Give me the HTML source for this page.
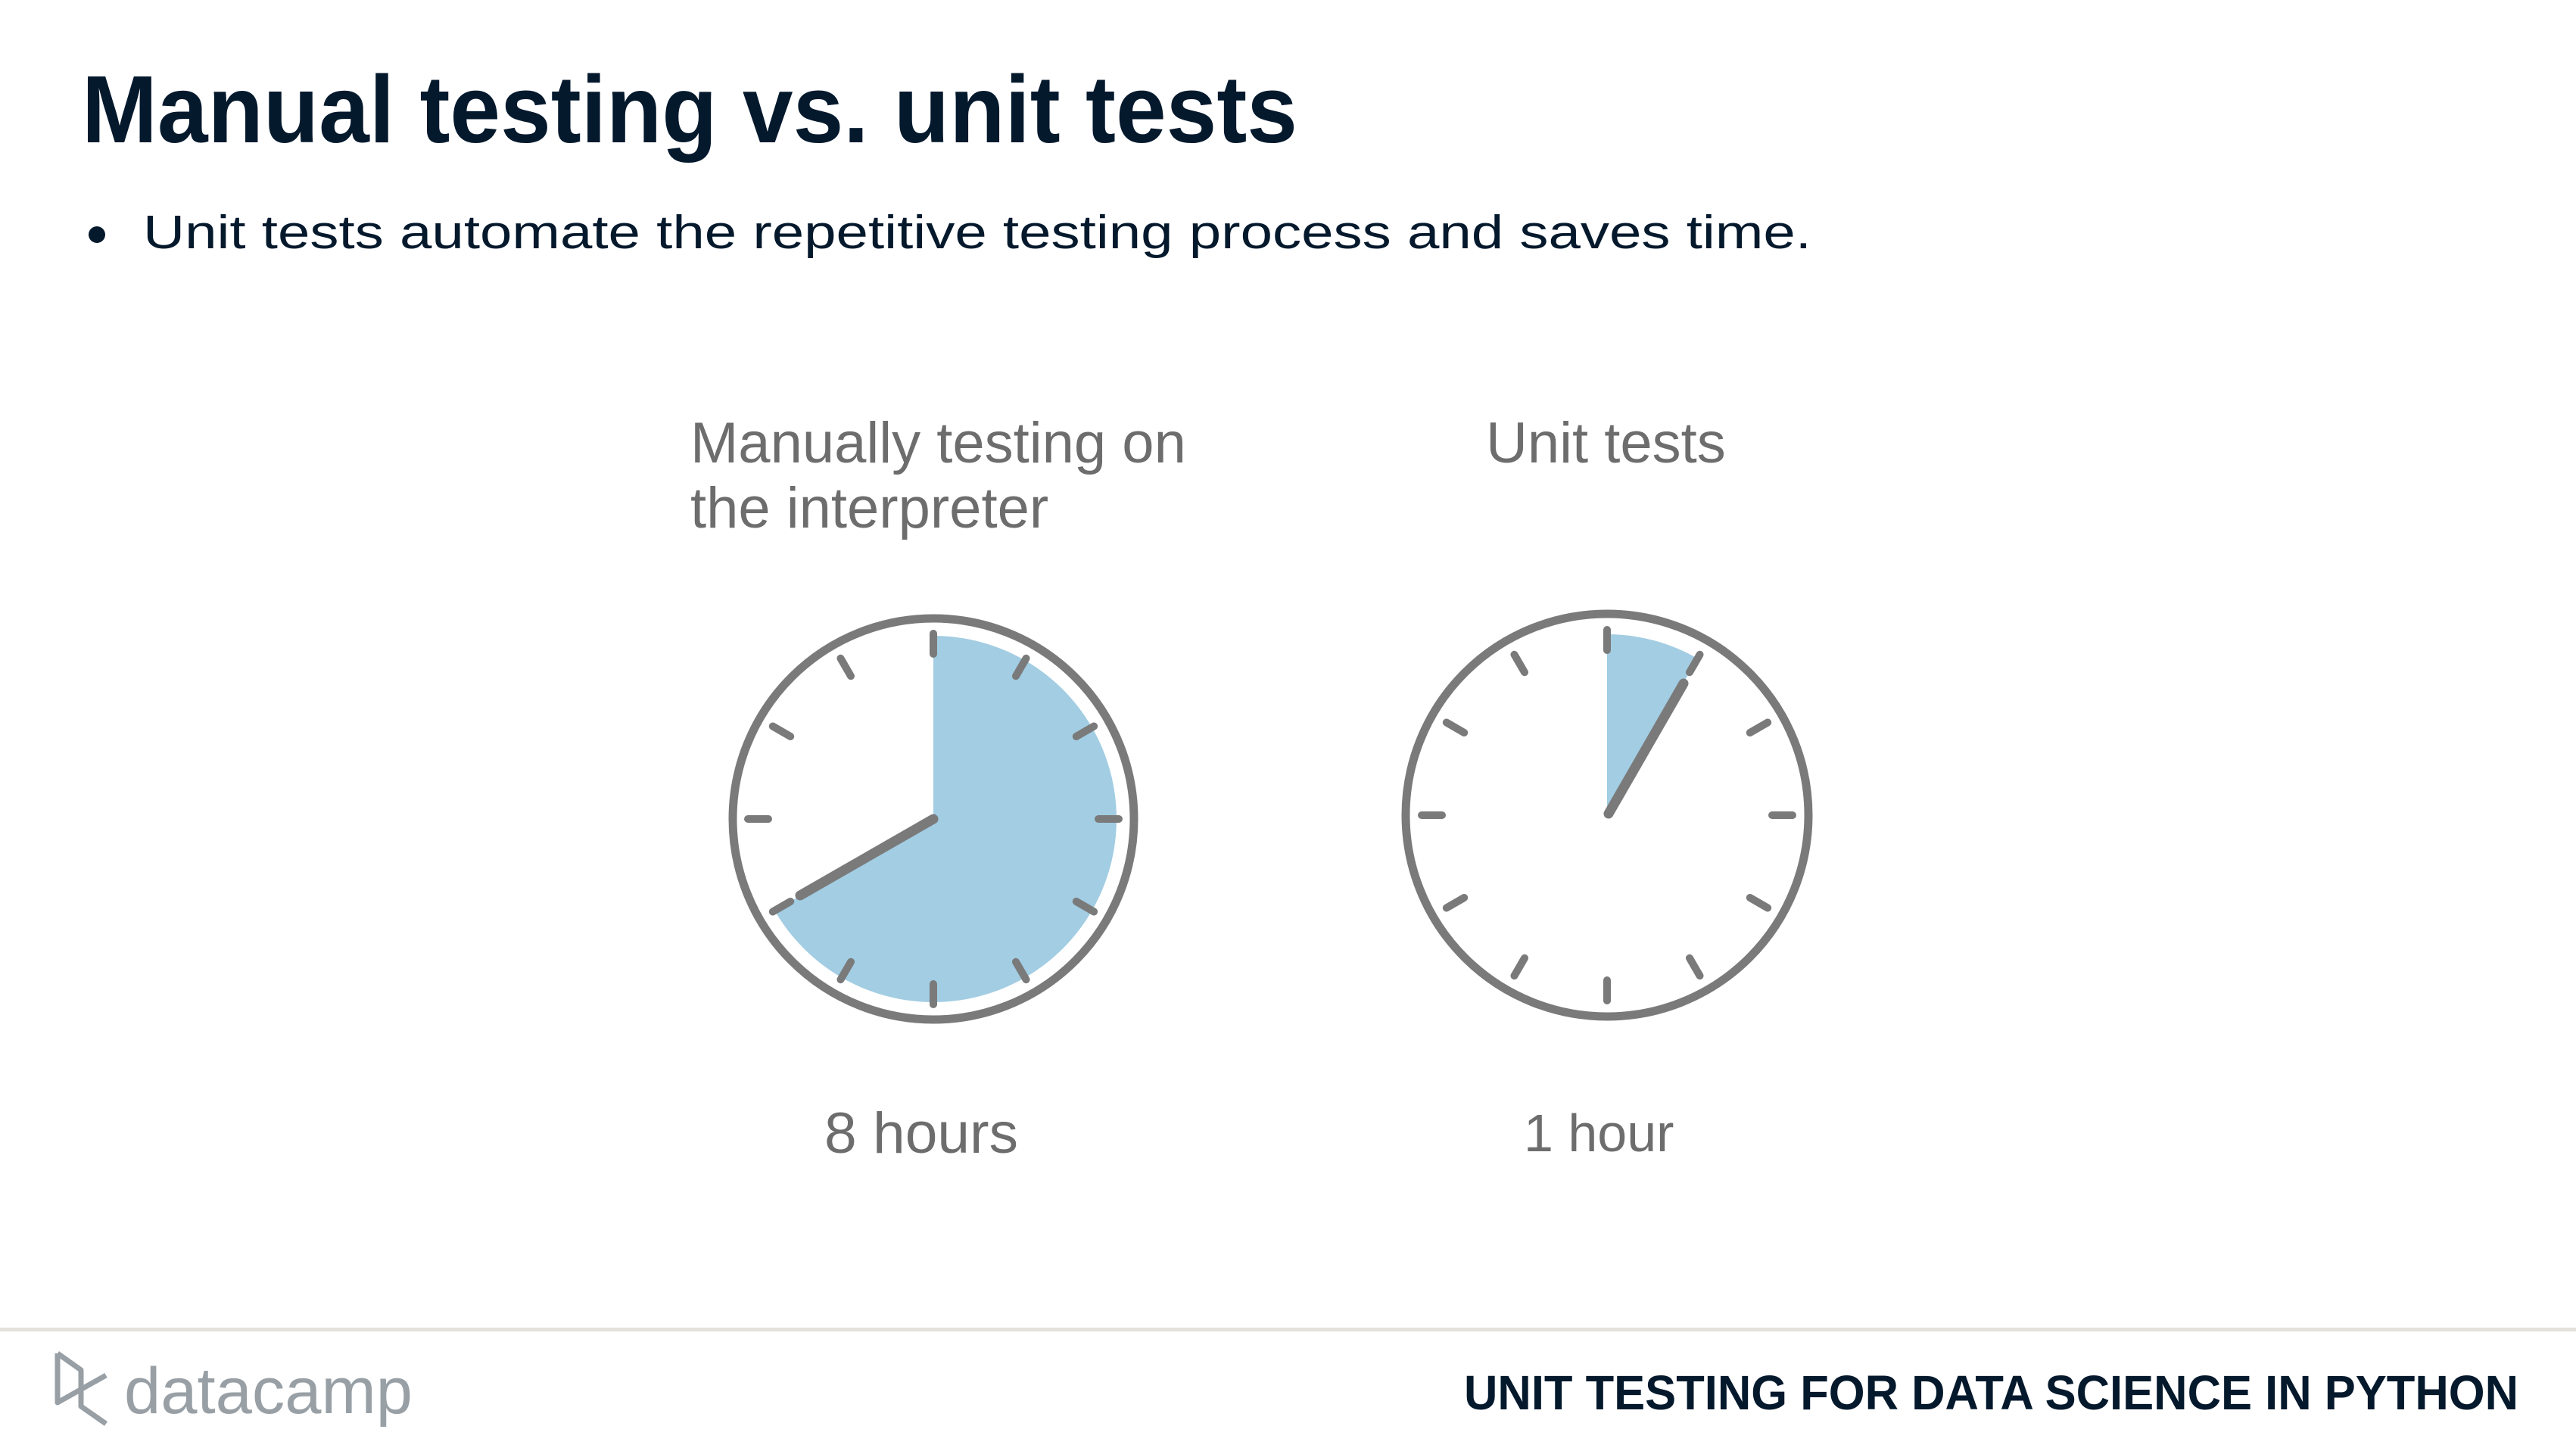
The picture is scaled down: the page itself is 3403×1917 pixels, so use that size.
<!DOCTYPE html>
<html><head><meta charset="utf-8"><style>html,body{margin:0;padding:0;background:#fff;}svg{display:block}</style></head>
<body>
<svg width="3403" height="1917" viewBox="0 0 3403 1917" xmlns="http://www.w3.org/2000/svg">
<rect width="3403" height="1917" fill="#fff"/>
<text x="108" y="188" font-family="Liberation Sans, sans-serif" font-weight="bold" font-size="126" fill="#05192d" textLength="1606" lengthAdjust="spacingAndGlyphs">Manual testing vs. unit tests</text>
<circle cx="128" cy="310" r="11" fill="#05192d"/>
<text x="189" y="328" font-family="Liberation Sans, sans-serif" font-size="62" fill="#05192d" textLength="2204" lengthAdjust="spacingAndGlyphs">Unit tests automate the repetitive testing process and saves time.</text>

<g font-family="Liberation Sans, sans-serif" font-size="76" fill="#6d6d6d">
<text x="912" y="611">Manually testing on</text>
<text x="912" y="697">the interpreter</text>
<text x="1963" y="611">Unit tests</text>
<text x="1089" y="1523" textLength="256" lengthAdjust="spacingAndGlyphs">8 hours</text>
<text x="2013" y="1521" font-size="70">1 hour</text>
</g>

<!-- clock 1 -->
<g transform="translate(1233,1082)">
<path d="M0 0 L0 -242 A242 242 0 1 1 -209.6 121 Z" fill="#a2cde3"/>
<circle r="265" fill="none" stroke="#7a7a7a" stroke-width="11"/>
<g stroke="#7a7a7a" stroke-width="10" stroke-linecap="round">
<line x1="0" y1="-218" x2="0" y2="-245" transform="rotate(0)"/>
<line x1="0" y1="-218" x2="0" y2="-245" transform="rotate(30)"/>
<line x1="0" y1="-218" x2="0" y2="-245" transform="rotate(60)"/>
<line x1="0" y1="-218" x2="0" y2="-245" transform="rotate(90)"/>
<line x1="0" y1="-218" x2="0" y2="-245" transform="rotate(120)"/>
<line x1="0" y1="-218" x2="0" y2="-245" transform="rotate(150)"/>
<line x1="0" y1="-218" x2="0" y2="-245" transform="rotate(180)"/>
<line x1="0" y1="-218" x2="0" y2="-245" transform="rotate(210)"/>
<line x1="0" y1="-218" x2="0" y2="-245" transform="rotate(240)"/>
<line x1="0" y1="-218" x2="0" y2="-245" transform="rotate(270)"/>
<line x1="0" y1="-218" x2="0" y2="-245" transform="rotate(300)"/>
<line x1="0" y1="-218" x2="0" y2="-245" transform="rotate(330)"/>
</g>
<line x1="0" y1="0" x2="-176" y2="101" stroke="#7a7a7a" stroke-width="13" stroke-linecap="round"/>
</g>

<!-- clock 2 -->
<g transform="translate(2123,1077)">
<path d="M0 0 L0 -239 A239 239 0 0 1 119.5 -207 Z" fill="#a2cde3"/>
<circle r="266" fill="none" stroke="#7a7a7a" stroke-width="11"/>
<g stroke="#7a7a7a" stroke-width="10" stroke-linecap="round">
<line x1="0" y1="-218" x2="0" y2="-245" transform="rotate(0)"/>
<line x1="0" y1="-218" x2="0" y2="-245" transform="rotate(30)"/>
<line x1="0" y1="-218" x2="0" y2="-245" transform="rotate(60)"/>
<line x1="0" y1="-218" x2="0" y2="-245" transform="rotate(90)"/>
<line x1="0" y1="-218" x2="0" y2="-245" transform="rotate(120)"/>
<line x1="0" y1="-218" x2="0" y2="-245" transform="rotate(150)"/>
<line x1="0" y1="-218" x2="0" y2="-245" transform="rotate(180)"/>
<line x1="0" y1="-218" x2="0" y2="-245" transform="rotate(210)"/>
<line x1="0" y1="-218" x2="0" y2="-245" transform="rotate(240)"/>
<line x1="0" y1="-218" x2="0" y2="-245" transform="rotate(270)"/>
<line x1="0" y1="-218" x2="0" y2="-245" transform="rotate(300)"/>
<line x1="0" y1="-218" x2="0" y2="-245" transform="rotate(330)"/>
</g>
<line x1="2" y1="-2" x2="101" y2="-174" stroke="#7a7a7a" stroke-width="13" stroke-linecap="round"/>
</g>

<!-- footer -->
<rect x="0" y="1754" width="3403" height="5" fill="#e5e1dc"/>
<g fill="none" stroke="#98a0a6" stroke-width="7" stroke-linejoin="round">
<path d="M76 1788 L107 1810 L107 1858 L140 1881"/>
<path d="M76 1788 L76 1853 L140 1817"/>
</g>
<text x="164" y="1867" font-family="Liberation Sans, sans-serif" font-size="86" fill="#98a0a6" textLength="381" lengthAdjust="spacingAndGlyphs">datacamp</text>
<text x="1934" y="1862" font-family="Liberation Sans, sans-serif" font-weight="bold" font-size="64" fill="#05192d" textLength="1393" lengthAdjust="spacingAndGlyphs">UNIT TESTING FOR DATA SCIENCE IN PYTHON</text>
</svg>
</body></html>
